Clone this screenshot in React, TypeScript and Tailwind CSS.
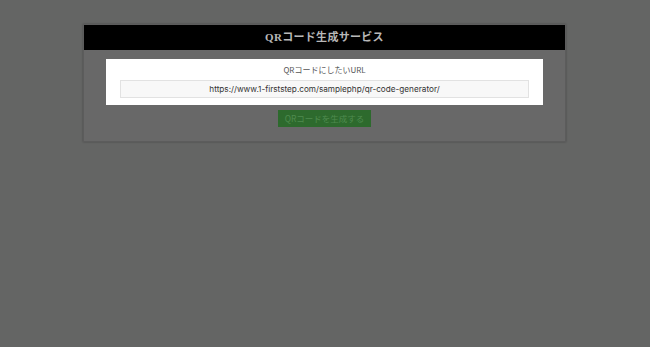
export default function App() {
  return (
    <div className="min-h-[347px] w-full bg-[#646564] pt-6 font-['Noto_Sans_CJK_JP','Noto_Sans',sans-serif]">
      <div className="ml-[83px] w-[483px] border border-[#5c5c5c] bg-[#686868] pb-[14px] shadow-[0_0_2px_rgba(0,0,0,0.3)]">
        {/* Header */}
        <div className="flex h-[25px] items-center justify-center bg-black">
          <h1 className="font-['Liberation_Serif','Noto_Sans_CJK_JP',serif] text-[11px] font-bold tracking-[0.3px] text-[#b8b8b8]">
            QRコード生成サービス
          </h1>
        </div>

        {/* Spotlighted form */}
        <div className="mx-[22px] mt-[9px] bg-white px-[14px] pb-[7px] pt-[5px]">
          <p className="text-center text-[8px] leading-[12px] text-[#555]">QRコードにしたいURL</p>
          <div className="mt-[4px] flex h-[18px] items-center justify-center border border-[#e2e2e2] bg-[#f8f8f8] font-['Inter','Noto_Sans',sans-serif] text-[8.2px] text-[#333]">
            https://www.1-firststep.com/samplephp/qr-code-generator/
          </div>
        </div>

        <div className="mt-[5px] flex justify-center">
          <button className="h-[17px] w-[93px] bg-[#2d6a2d] text-[8.5px] leading-none text-[#4f8a4f]">
            QRコードを生成する
          </button>
        </div>
      </div>
    </div>
  );
}
